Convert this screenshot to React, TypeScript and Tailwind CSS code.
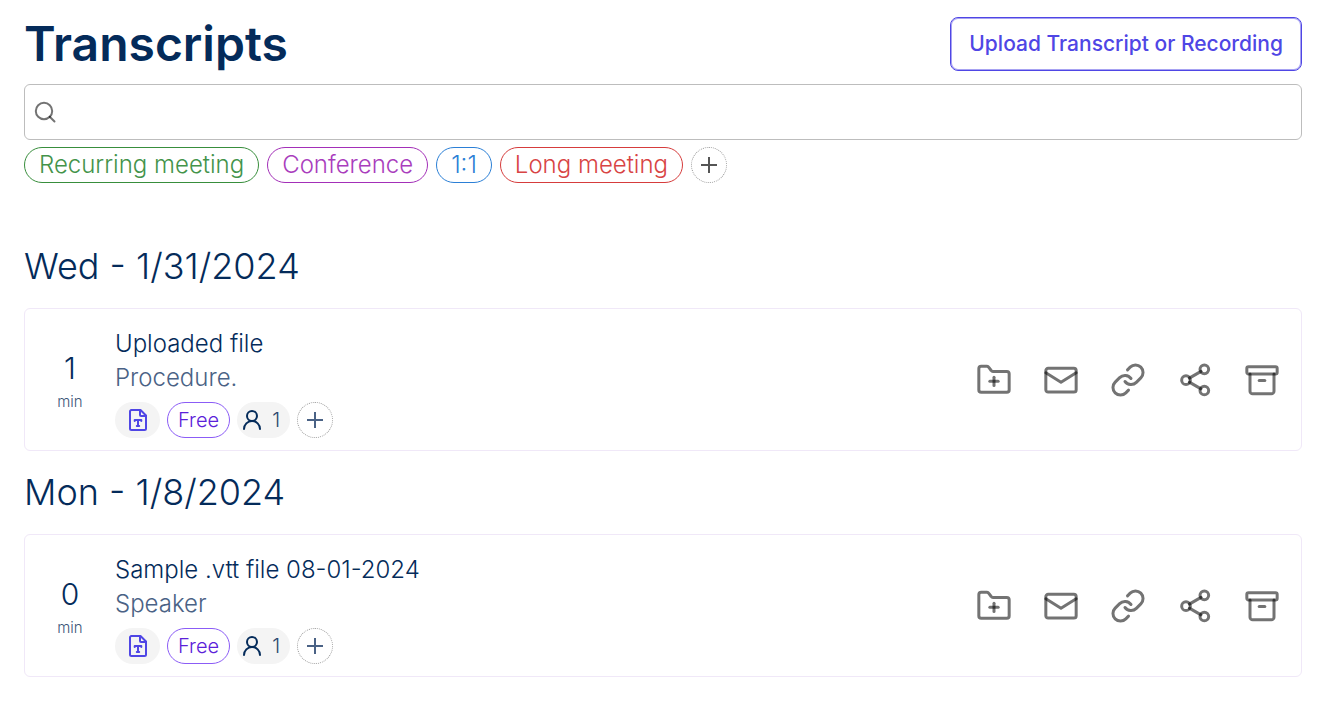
import type { ReactNode } from 'react'

type Transcript = {
  id: string
  minutes: number
  title: string
  snippet: string
  speakers: number
}

type TranscriptGroup = {
  date: string
  transcripts: Transcript[]
}

const groups: TranscriptGroup[] = [
  {
    date: 'Wed - 1/31/2024',
    transcripts: [
      { id: 'uploaded', minutes: 1, title: 'Uploaded file', snippet: 'Procedure.', speakers: 1 },
    ],
  },
  {
    date: 'Mon - 1/8/2024',
    transcripts: [
      { id: 'sample', minutes: 0, title: 'Sample .vtt file 08-01-2024', snippet: 'Speaker', speakers: 1 },
    ],
  },
]

const filters = [
  { label: 'Recurring meeting', className: 'border-[#388e3c] text-[#43934a]' },
  { label: 'Conference', className: 'border-[#a32fb8] text-[#a93dbd]' },
  { label: '1:1', className: 'border-[#2b7fd6] text-[#2b7fd6]' },
  { label: 'Long meeting', className: 'border-[#d63c3c] text-[#d84444]' },
]

function Icon({ className, width = 2, children }: { className: string; width?: number; children: ReactNode }) {
  return (
    <svg
      className={className}
      viewBox="0 0 24 24"
      fill="none"
      stroke="currentColor"
      strokeWidth={width}
      strokeLinecap="round"
      strokeLinejoin="round"
      aria-hidden="true"
    >
      {children}
    </svg>
  )
}

const actions = [
  {
    label: 'Add to folder',
    shapes: (
      <>
        <path d="M12 10.3v5" />
        <path d="M9.5 12.8h5" />
        <path d="M2.9 18V5.2a1.4 1.4 0 0 1 1.4-1.4h3.5a1.4 1.4 0 0 1 1.1.6l1.4 1.9a1.4 1.4 0 0 0 1.1.6h8.3a1.4 1.4 0 0 1 1.4 1.4V18a1.4 1.4 0 0 1-1.4 1.4H4.3A1.4 1.4 0 0 1 2.9 18z" />
      </>
    ),
  },
  {
    label: 'Send by email',
    shapes: (
      <>
        <rect x="2.9" y="5" width="18.2" height="14.2" rx="1.4" />
        <path d="m2.9 7.7 9.1 5.6 9.1-5.6" />
      </>
    ),
  },
  {
    label: 'Copy link',
    shapes: (
      <>
        <path d="M10.2 12.9a4.5 4.5 0 0 0 6.8.5l2.7-2.7a4.5 4.5 0 0 0-6.4-6.4l-1.6 1.6" />
        <path d="M13.8 11.1a4.5 4.5 0 0 0-6.8-.5l-2.7 2.7a4.5 4.5 0 0 0 6.4 6.4l1.6-1.6" />
      </>
    ),
  },
  {
    label: 'Share',
    shapes: (
      <>
        <circle cx="6.6" cy="12.1" r="2.6" />
        <circle cx="17.6" cy="5.6" r="2.6" />
        <circle cx="17.6" cy="18.3" r="2.6" />
        <path d="m8.6 10.9 7-4.1" />
        <path d="m8.6 13.3 7 4" />
      </>
    ),
  },
  {
    label: 'Archive',
    shapes: (
      <>
        <rect x="2.9" y="4" width="18.2" height="4.4" rx="1" />
        <path d="M4.8 8.4v10.3a1.6 1.6 0 0 0 1.6 1.6h11.2a1.6 1.6 0 0 0 1.6-1.6V8.4" />
        <path d="M10.3 12.3h3.4" />
      </>
    ),
  },
]

function AddTagButton({ className }: { className: string }) {
  return (
    <button
      type="button"
      aria-label="Add tag"
      className={`flex size-9 items-center justify-center rounded-full border border-dotted border-[#9e9e9e] ${className}`}
    >
      <Icon className="size-6" width={2}>
        <path d="M4 12h16M12 4v16" strokeLinecap="butt" />
      </Icon>
    </button>
  )
}

function TranscriptCard({ transcript }: { transcript: Transcript }) {
  return (
    <article className="flex items-center rounded-md border border-[#f0e8f8] py-3 pr-[19px]">
      <div className="flex w-[90px] shrink-0 flex-col items-center pt-1">
        <span className="text-[30px] leading-10">{transcript.minutes}</span>
        <span className="text-[15px] leading-7 text-[#3c5679]">min</span>
      </div>

      <div className="min-w-0 flex-1 pt-1.5">
        <h3 className="truncate text-2xl leading-[34px]">{transcript.title}</h3>
        <p className="truncate text-2xl leading-[34px] text-[#4a6285]">{transcript.snippet}</p>
        <div className="mt-[7px] flex items-center gap-[7px]">
          <span className="flex h-9 w-[45px] items-center justify-center rounded-full bg-[#f4f4f4] text-[#4f46e5]">
            <Icon className="size-6">
              <path d="M14 2.5V7a1 1 0 0 0 1 1h5" />
              <path d="M5 2h9.500L20 7.500V20.500a1.500 1.500 0 0 1-1.500 1.500h-13A1.500 1.500 0 0 1 4 20.500V3.500A1.500 1.500 0 0 1 5.500 2z" />
              <path d="M8.700 13v-1h6.600v1M12 12v6M10.800 18h2.400" />
            </Icon>
          </span>
          <span className="flex h-9 items-center rounded-full border border-[#8b5cf6] px-[10px] text-xl text-[#5b21d9]">
            Free
          </span>
          <span className="flex h-9 items-center gap-2 rounded-full bg-[#f4f4f4] pr-[10px] pl-[3px] text-xl text-[#2b476f]">
            <Icon className="size-6 text-[#042b5a]" width={2}>
              <circle cx="12" cy="8" r="5" />
              <path d="M20 21a8 8 0 0 0-16 0" />
            </Icon>
            {transcript.speakers}
          </span>
          <AddTagButton className="text-[#4a6285]" />
        </div>
      </div>

      <div className="flex shrink-0 items-center gap-[27px] text-black/55">
        {actions.map(action => (
          <button key={action.label} type="button" aria-label={action.label} className="rounded-md">
            <Icon className="size-10" width={1.8}>
              {action.shapes}
            </Icon>
          </button>
        ))}
      </div>
    </article>
  )
}

export default function App() {
  return (
    <main className="min-h-screen bg-white pt-4 pr-[22px] pl-6 font-['Inter',sans-serif] font-light text-[#042b5a]">
      <header className="flex items-center justify-between">
        <h1 className="text-5xl leading-[56px] font-semibold">Transcripts</h1>
        <button
          type="button"
          className="h-[54px] rounded-lg border border-[#4f46e5] px-[18px] text-[21px] font-medium text-[#4f46e5] inset-ring-1 inset-ring-[#4f46e5]/50"
        >
          Upload Transcript or Recording
        </button>
      </header>

      <label className="mt-3 flex h-14 items-center rounded-md border border-[#bdbdbd] px-2">
        <Icon className="size-6 text-black/55" width={2}>
          <circle cx="11" cy="11" r="8.2" />
          <path d="m16.700 16.700 4.800 4.800" />
        </Icon>
        <input type="text" aria-label="Search transcripts" className="h-full min-w-0 flex-1 px-2 text-2xl outline-none" />
      </label>

      <div className="mt-[7px] flex flex-wrap items-center gap-2">
        {filters.map(filter => (
          <button
            key={filter.label}
            type="button"
            className={`flex h-9 items-center rounded-full border px-[14px] text-2xl ${filter.className}`}
          >
            {filter.label}
          </button>
        ))}
        <AddTagButton className="text-[#555555]" />
      </div>

      <div className="mt-[42px]">
        {groups.map(group => (
          <section key={group.date}>
            <h2 className="flex h-[83px] items-center pb-0.5 text-4xl">{group.date}</h2>
            {group.transcripts.map(transcript => (
              <TranscriptCard key={transcript.id} transcript={transcript} />
            ))}
          </section>
        ))}
      </div>
    </main>
  )
}
